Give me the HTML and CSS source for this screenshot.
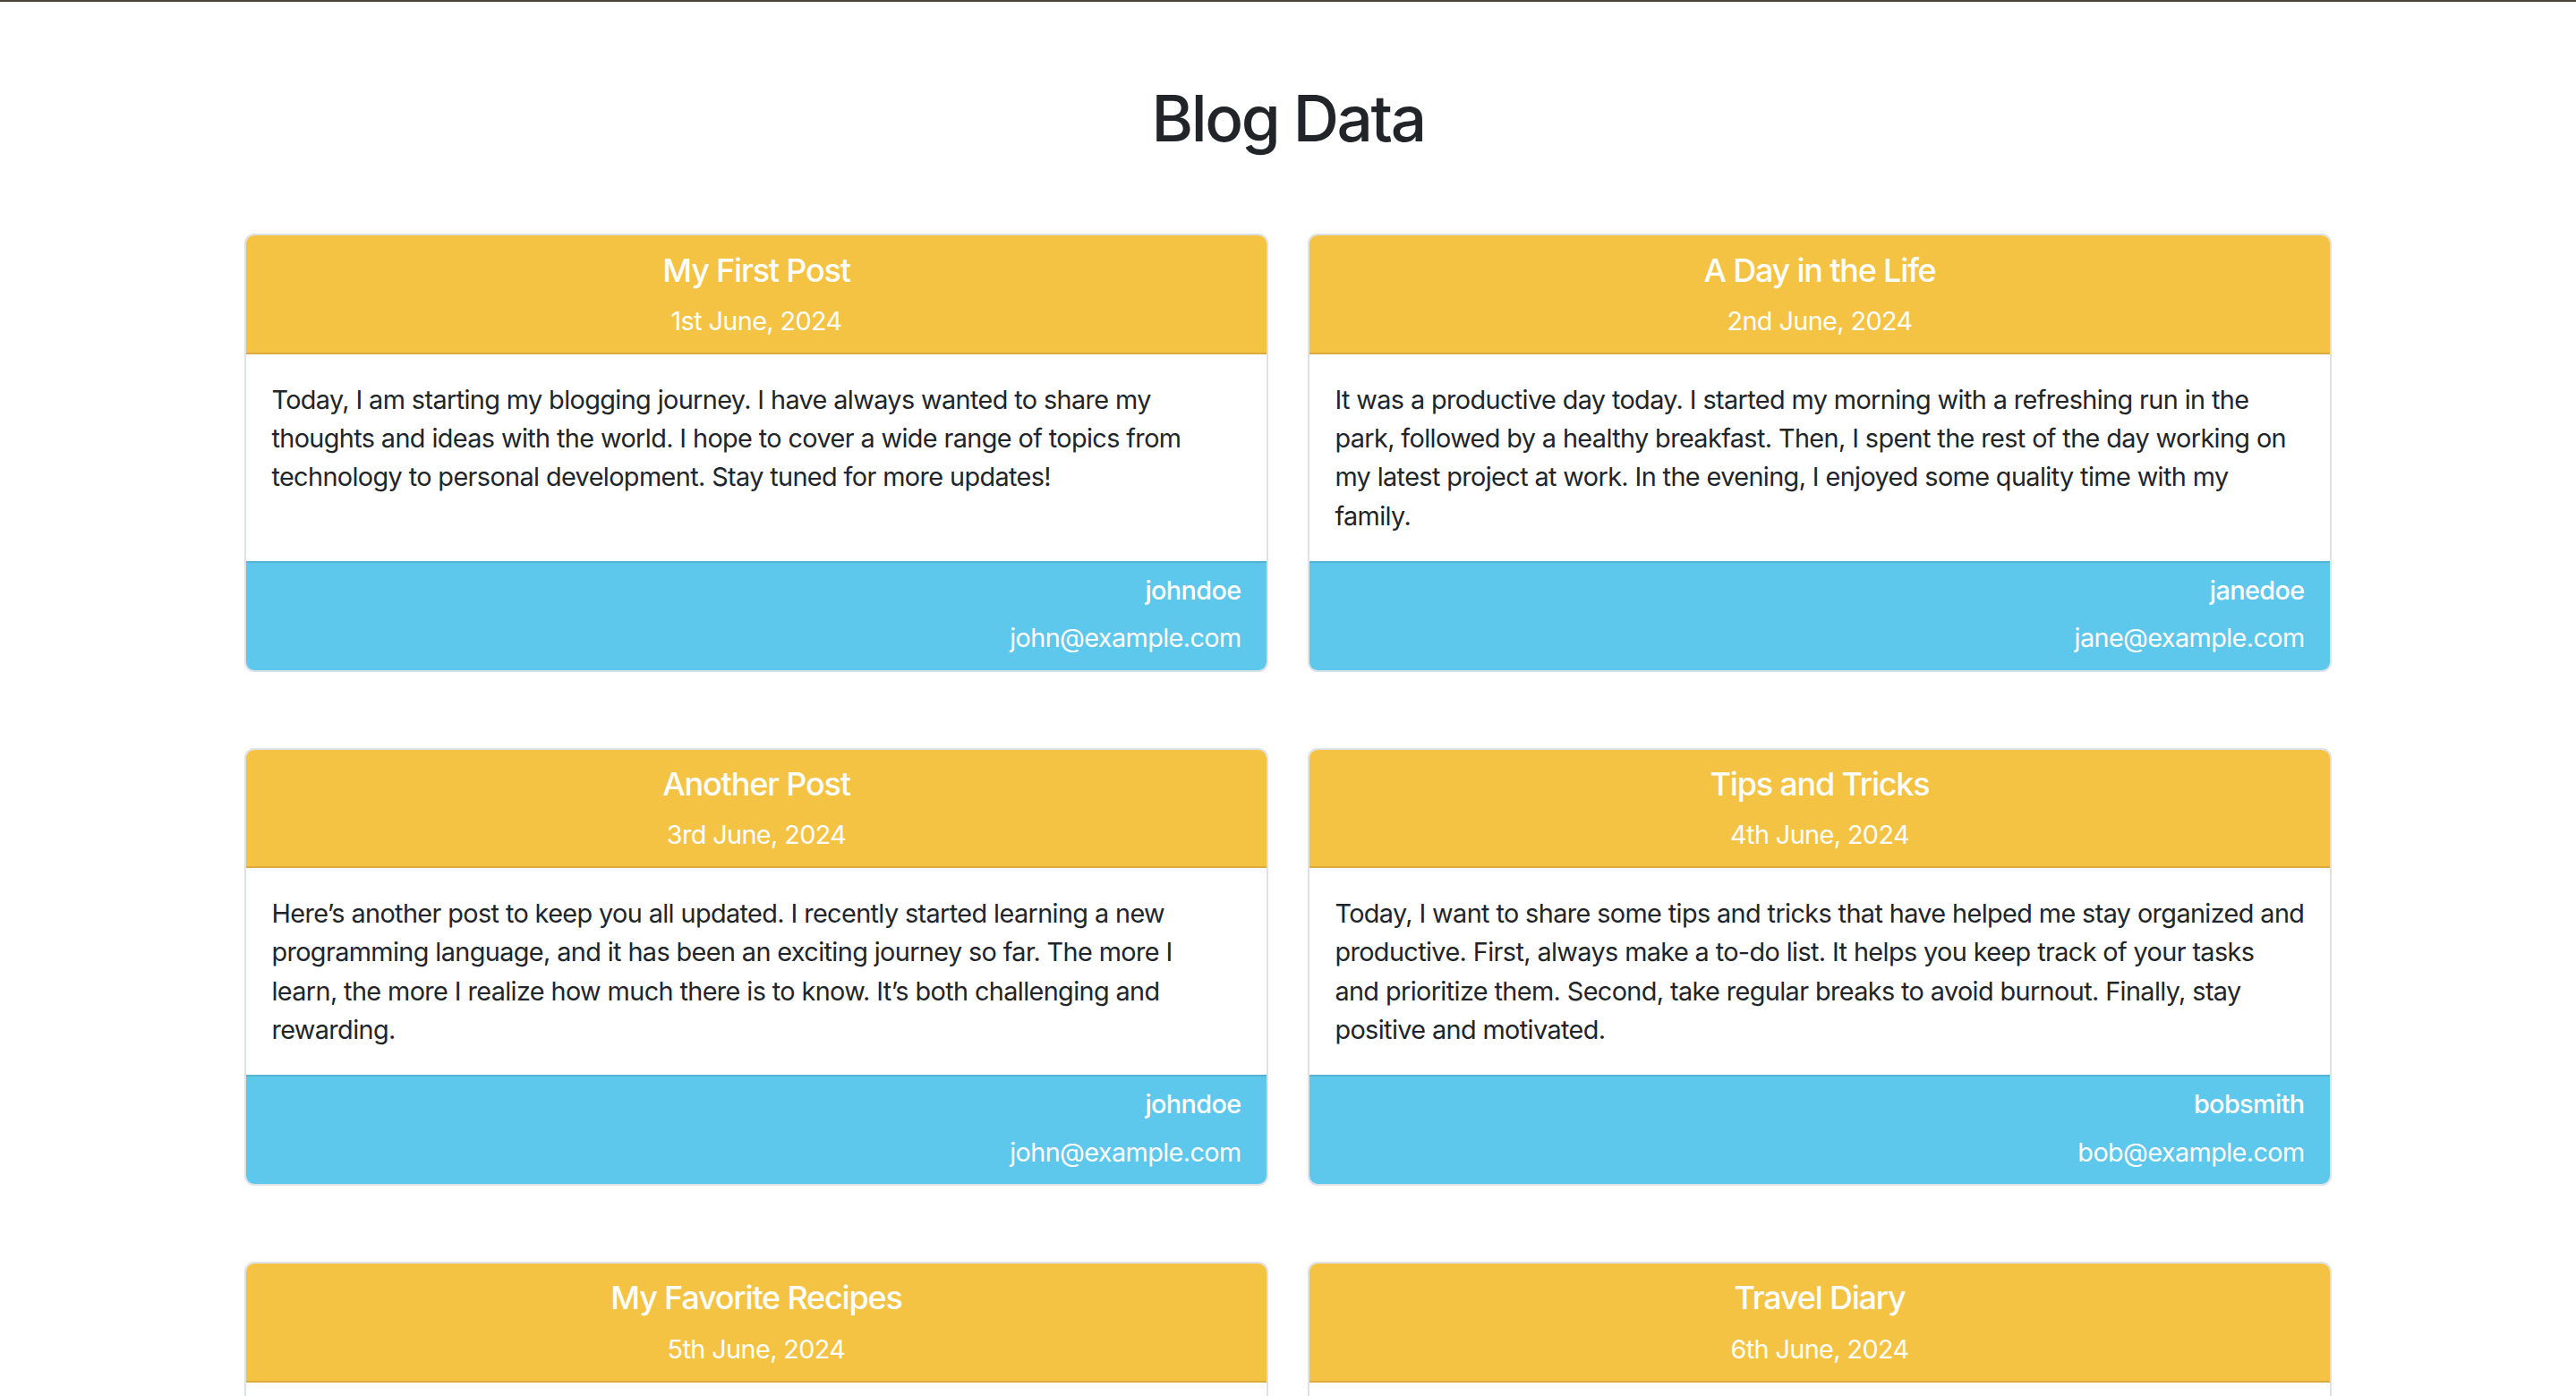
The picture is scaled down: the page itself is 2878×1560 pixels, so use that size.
FILE: index.html
```html
<!DOCTYPE html>
<html lang="en">
<head>
<meta charset="utf-8">
<title>Blog Data</title>
<link rel="stylesheet" href="styles.css">
</head>
<body>
<div class="topline"></div>
<main class="container">
  <h1 class="page-title">Blog Data</h1>
  <div class="grid">
    <article class="card">
      <header class="card-header">
        <h5 class="card-title">My First Post</h5>
        <p class="card-date">1st June, 2024</p>
      </header>
      <div class="card-body">
        <p>Today, I am starting my blogging journey. I have always wanted to share my thoughts and ideas with the world. I hope to cover a wide range of topics from technology to personal development. Stay tuned for more updates!</p>
      </div>
      <footer class="card-footer">
        <h6 class="author">johndoe</h6>
        <p class="email">john@example.com</p>
      </footer>
    </article>
    <article class="card">
      <header class="card-header">
        <h5 class="card-title">A Day in the Life</h5>
        <p class="card-date">2nd June, 2024</p>
      </header>
      <div class="card-body">
        <p>It was a productive day today. I started my morning with a refreshing run in the park, followed by a healthy breakfast. Then, I spent the rest of the day working on my latest project at work. In the evening, I enjoyed some quality time with my family.</p>
      </div>
      <footer class="card-footer">
        <h6 class="author">janedoe</h6>
        <p class="email">jane@example.com</p>
      </footer>
    </article>
    <article class="card">
      <header class="card-header">
        <h5 class="card-title">Another Post</h5>
        <p class="card-date">3rd June, 2024</p>
      </header>
      <div class="card-body">
        <p>Here’s another post to keep you all updated. I recently started learning a new programming language, and it has been an exciting journey so far. The more I learn, the more I realize how much there is to know. It’s both challenging and rewarding.</p>
      </div>
      <footer class="card-footer">
        <h6 class="author">johndoe</h6>
        <p class="email">john@example.com</p>
      </footer>
    </article>
    <article class="card">
      <header class="card-header">
        <h5 class="card-title">Tips and Tricks</h5>
        <p class="card-date">4th June, 2024</p>
      </header>
      <div class="card-body">
        <p>Today, I want to share some tips and tricks that have helped me stay organized and productive. First, always make a to-do list. It helps you keep track of your tasks and prioritize them. Second, take regular breaks to avoid burnout. Finally, stay positive and motivated.</p>
      </div>
      <footer class="card-footer">
        <h6 class="author">bobsmith</h6>
        <p class="email">bob@example.com</p>
      </footer>
    </article>
    <article class="card">
      <header class="card-header">
        <h5 class="card-title">My Favorite Recipes</h5>
        <p class="card-date">5th June, 2024</p>
      </header>
      <div class="card-body">
        <p>Cooking is one of my favorite hobbies. Today, I want to share some of my favorite recipes with you. From simple salads to hearty stews, there is something for everyone.</p>
      </div>
      <footer class="card-footer">
        <h6 class="author">janedoe</h6>
        <p class="email">jane@example.com</p>
      </footer>
    </article>
    <article class="card">
      <header class="card-header">
        <h5 class="card-title">Travel Diary</h5>
        <p class="card-date">6th June, 2024</p>
      </header>
      <div class="card-body">
        <p>I just returned from an amazing trip. I visited several beautiful places, met wonderful people and tried lots of delicious local food. Here are some highlights from my journey.</p>
      </div>
      <footer class="card-footer">
        <h6 class="author">bobsmith</h6>
        <p class="email">bob@example.com</p>
      </footer>
    </article>
  </div>
</main>
</body>
</html>
```
FILE: styles.css
```css
html { scrollbar-width: none; }
html::-webkit-scrollbar { display: none; }

body {
  margin: 0;
  background: #ffffff;
  color: #212529;
  font-family: Inter, "Noto Sans", "Liberation Sans", sans-serif;
  font-size: 28.8px;
  line-height: 1.5;
  letter-spacing: -0.6px;
}

.topline {
  height: 2px;
  background: #4b4137;
}

.container {
  width: 2376px;
  box-sizing: border-box;
  margin: 0 auto;
  padding: 87px 21.6px 60px;
}

.page-title {
  margin: 0 0 86px;
  font-size: 71px;
  line-height: 86.4px;
  font-weight: 500;
  text-align: center;
  letter-spacing: -2.4px;
}

.grid {
  display: grid;
  grid-template-columns: 1fr 1fr;
  column-gap: 43.2px;
  row-gap: 85px;
}

.card {
  display: flex;
  flex-direction: column;
  border: 2px solid #dee1e6;
  border-radius: 11px;
  overflow: hidden;
  background: #fff;
}

.card-header {
  background: #f5c344;
  color: #fff;
  text-align: center;
  padding: 17.4px 28.8px 14px;
  border-bottom: 2px solid #dcab3c;
}

.card-title {
  margin: 0 0 13px;
  font-size: 36px;
  line-height: 43.2px;
  font-weight: 500;
  letter-spacing: -1.2px;
}

.card-date {
  margin: 0;
}

.card-body {
  flex: 1;
  padding: 28.8px;
}

.card-body p {
  margin: 0;
}

.card-footer {
  background: #5dc7ec;
  color: #fff;
  text-align: right;
  padding: 14.4px 28.8px 14px;
  border-top: 2px solid #53b3d5;
}

.author {
  margin: 0 0 14px;
  font-size: 28.8px;
  line-height: 34.56px;
  font-weight: 500;
}

.email {
  margin: 0;
}
```
